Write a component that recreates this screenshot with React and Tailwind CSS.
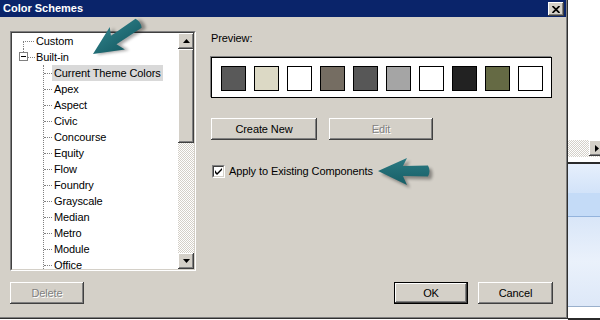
import React from "react";

const raised =
  "bg-[#d4d0c8] shadow-[inset_-1px_-1px_0_#404040,inset_1px_1px_0_#ffffff,inset_-2px_-2px_0_#808080,inset_2px_2px_0_#d4d0c8]";
const hatch =
  "bg-[repeating-conic-gradient(#d4d0c8_0%_25%,#ffffff_0%_50%)] bg-[length:2px_2px]";
const disabledText = "text-[#808080] [text-shadow:1px_1px_0_#ffffff]";

const swatches = [
  "#595959",
  "#dcd9c5",
  "#ffffff",
  "#756d62",
  "#575757",
  "#a5a5a5",
  "#ffffff",
  "#222222",
  "#656a44",
  "#ffffff",
];

const children = [
  "Current Theme Colors",
  "Apex",
  "Aspect",
  "Civic",
  "Concourse",
  "Equity",
  "Flow",
  "Foundry",
  "Grayscale",
  "Median",
  "Metro",
  "Module",
  "Office",
];

function Arrow({ transform, len }) {
  const d = `M0,0 L29,-13 L25,-5 L${len},-5.5 Q${len + 3},0 ${len},5.5 L25,5 L29,14 Z`;
  return (
    <g transform={transform}>
      <path d={d} fill="#000" opacity="0.35" transform="translate(3,3)" filter="url(#blur)" />
      <path d={d} fill="url(#teal)" />
    </g>
  );
}

function Btn({ children, className = "", disabled }) {
  return (
    <div
      className={`${raised} h-[22px] flex items-center justify-center text-[11px] ${
        disabled ? disabledText : "text-black"
      } ${className}`}
    >
      {children}
    </div>
  );
}

export default function App() {
  return (
    <div className="w-[600px] h-[320px] flex bg-white overflow-hidden relative font-['Liberation_Sans',Arial,sans-serif] tracking-[-0.1px]">
      {/* Dialog */}
      <div className="w-[568px] h-[319px] shrink-0 bg-[#d4d0c8] flex flex-col pr-[2px] pb-[2px] shadow-[inset_-1px_-1px_0_#303030,inset_-2px_-2px_0_#808080]">
        {/* Title bar */}
        <div className="h-[17px] bg-[#0a246a] flex items-start justify-between pl-[3px] pr-[2px]">
          <span className="text-white font-bold text-[11px] leading-[17px] tracking-normal">Color Schemes</span>
          <div className={`${raised} w-[16px] h-[14px] mt-[2px] flex items-center justify-center`}>
            <svg width="8" height="7" viewBox="0 0 8 7">
              <path d="M0.5 0 L7.5 7 M7.5 0 L0.5 7" stroke="#000" strokeWidth="1.7" />
            </svg>
          </div>
        </div>

        {/* Body */}
        <div className="flex-1 flex flex-col pl-[10px]">
          <div className="flex mt-[14px]">
            {/* Tree */}
            <div className="w-[186px] h-[240px] border border-t-[#808080] border-l-[#808080] border-r-white border-b-white">
              <div className="w-full h-full border border-t-[#404040] border-l-[#404040] border-r-[#d4d0c8] border-b-[#d4d0c8] flex">
                <div className="flex-1 bg-white overflow-hidden text-[11px] text-black">
                  {/* Custom */}
                  <div className="h-[16px] flex items-center">
                    <div className="w-[11px] shrink-0" />
                    <div className="w-[11px] h-[16px] flex flex-col shrink-0">
                      <div className="h-[8px]" />
                      <div className="flex-1 border-l border-t border-dotted border-[#808080]" />
                    </div>
                    <span className="ml-[2px] leading-[16px]">Custom</span>
                  </div>
                  {/* Built-in */}
                  <div className="h-[16px] flex items-center">
                    <div className="w-[7px] shrink-0" />
                    <div className="w-[9px] h-[16px] flex flex-col items-center shrink-0">
                      <div className="w-0 h-[3px] border-l border-dotted border-[#808080]" />
                      <div className="w-[9px] h-[9px] border border-[#808080] bg-white flex items-center justify-center">
                        <div className="w-[5px] h-[1px] bg-black" />
                      </div>
                    </div>
                    <div className="w-[7px] h-0 border-t border-dotted border-[#808080] shrink-0" />
                    <span className="ml-[1px] leading-[16px]">Built-in</span>
                  </div>
                  {/* Children */}
                  <div className="ml-[31px] border-l border-dotted border-[#808080]">
                    {children.map((c, i) => (
                      <div key={c} className="h-[16px] flex items-center">
                        <div className="w-[8px] h-0 border-t border-dotted border-[#808080] shrink-0" />
                        <span
                          className={`px-[2px] leading-[16px] whitespace-nowrap ${
                            i === 0 ? "bg-[#d9d9d9]" : ""
                          }`}
                        >
                          {c}
                        </span>
                      </div>
                    ))}
                  </div>
                </div>
                {/* Scrollbar */}
                <div className="w-[16px] flex flex-col shrink-0">
                  <div className={`${raised} h-[16px] flex items-center justify-center`}>
                    <svg width="7" height="4" viewBox="0 0 7 4">
                      <path d="M3.5 0 L7 4 L0 4 Z" fill="#000" />
                    </svg>
                  </div>
                  <div className={`${raised} h-[94px]`} />
                  <div className={`flex-1 ${hatch}`} />
                  <div className={`${raised} h-[16px] flex items-center justify-center`}>
                    <svg width="7" height="4" viewBox="0 0 7 4">
                      <path d="M0 0 L7 0 L3.5 4 Z" fill="#000" />
                    </svg>
                  </div>
                </div>
              </div>
            </div>

            {/* Right panel */}
            <div className="ml-[15px] w-[341px] flex flex-col">
              <div className="mt-[1px] text-[11px] leading-[13px] text-black">Preview:</div>
              <div className="mt-[12px] h-[41px] w-[341px] bg-white border border-black shadow-[-1px_-1px_0_#808080] flex gap-[8px] pl-[9px] pt-[8px]">
                {swatches.map((s, i) => (
                  <div
                    key={i}
                    className="w-[25px] h-[25px] border border-black shrink-0"
                    style={{ backgroundColor: s }}
                  />
                ))}
              </div>
              <div className="mt-[20px] flex">
                <Btn className="w-[106px]">Create New</Btn>
                <Btn className="w-[104px] ml-[12px]" disabled>
                  Edit
                </Btn>
              </div>
              <div className="mt-[25px] flex items-center">
                <div className="ml-[1px] w-[13px] h-[13px] bg-white border border-t-[#808080] border-l-[#808080] border-r-white border-b-white shrink-0">
                  <div className="w-full h-full border border-t-[#404040] border-l-[#404040] border-r-[#d4d0c8] border-b-[#d4d0c8] flex items-center justify-center">
                    <svg width="7" height="7" viewBox="0 0 7 7">
                      <path d="M0 2 L0 5 L2 7 L7 2 L7 0 L2 5 Z" fill="#000" />
                    </svg>
                  </div>
                </div>
                <span className="ml-[4px] text-[11px] leading-[13px] text-black">Apply to Existing Components</span>
              </div>
            </div>
          </div>

          {/* Bottom buttons */}
          <div className="flex mt-[11px] pr-[13px]">
            <Btn className="w-[74px]" disabled>
              Delete
            </Btn>
            <div className="ml-auto w-[74px] h-[22px] border border-black">
              <div className={`${raised} w-full h-full flex items-center justify-center text-[11px] text-black`}>
                OK
              </div>
            </div>
            <Btn className="w-[75px] ml-[10px]">Cancel</Btn>
          </div>
        </div>
      </div>

      {/* Background application strip */}
      <div className="flex-1 flex flex-col overflow-hidden">
        <div className="h-[140px] bg-white" />
        <div className={`h-[17px] flex ${hatch}`}>
          <div className="w-[21px] shrink-0" />
          <div className={`${raised} w-[16px] h-[16px] shrink-0 flex items-center pl-[6px]`}>
            <svg width="4" height="7" viewBox="0 0 4 7">
              <path d="M0 0 L4 3.5 L0 7 Z" fill="#000" />
            </svg>
          </div>
        </div>
        <div className="h-[5px] bg-white" />
        <div className="h-[2px] bg-[#2b2b2b]" />
        <div className="h-[29px] bg-gradient-to-b from-[#e6effc] to-[#d2e3f9]" />
        <div className="h-[24px] bg-[#c4dbf7] border-b border-[#93b3dc]" />
        <div className="h-[90px] bg-gradient-to-b from-[#d9e6f8] via-[#eaf1fb] to-[#dde8f8] border-b border-[#9ab0cc]" />
        <div className="flex-1 bg-white" />
        <div className="h-[2px] bg-[#2b2b2b]" />
      </div>

      {/* Callout arrows */}
      <svg className="absolute inset-0 pointer-events-none" width="600" height="320" viewBox="0 0 600 320">
        <defs>
          <filter id="blur" x="-20%" y="-20%" width="140%" height="140%">
            <feGaussianBlur stdDeviation="1.5" />
          </filter>
          <linearGradient id="teal" x1="0" y1="0" x2="0" y2="1">
            <stop offset="0" stopColor="#2b7a83" />
            <stop offset="1" stopColor="#175e66" />
          </linearGradient>
        </defs>
        <Arrow transform="translate(93,54) rotate(-34)" len={55} />
        <Arrow transform="translate(378,171)" len={50} />
      </svg>
    </div>
  );
}
